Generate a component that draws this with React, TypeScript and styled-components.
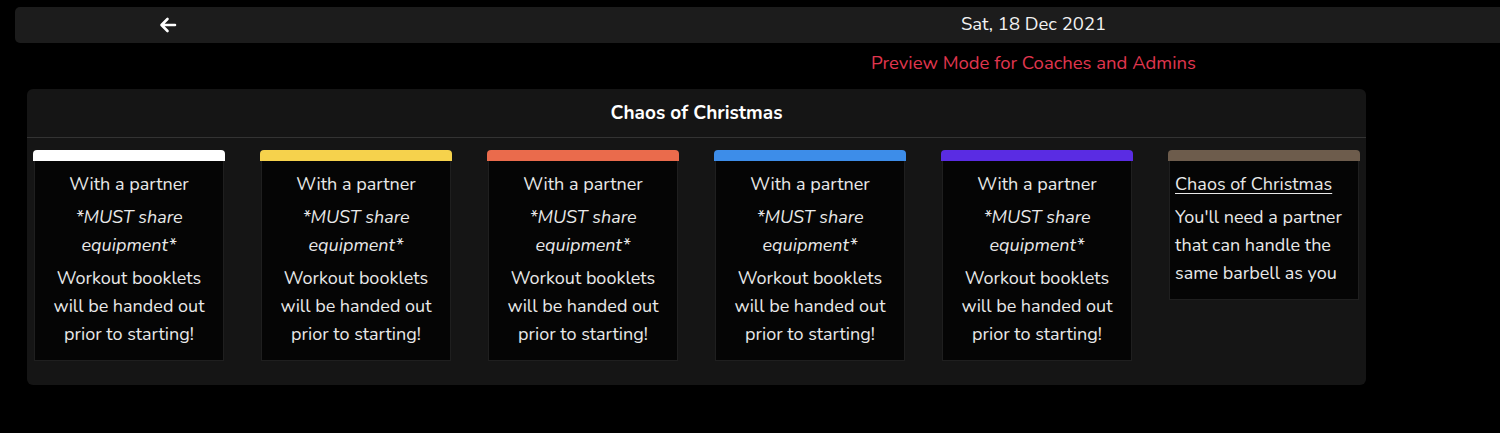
import styled, { createGlobalStyle } from "styled-components";

const GlobalStyle = createGlobalStyle`
  html, body {
    margin: 0;
    background: #000;
  }
  body {
    font-family: "Nunito", "Lato", "Open Sans", sans-serif;
    color: #e9e9e9;
  }
`;

const Page = styled.div`
  padding-top: 7px;
`;

const TopBar = styled.div`
  display: grid;
  grid-template-columns: 306px 1fr;
  height: 36px;
  margin-left: 15px;
  background: #1c1c1c;
  border-radius: 5px 0 0 5px;
`;

const BackButton = styled.button`
  display: flex;
  align-items: center;
  justify-content: center;
  background: none;
  border: none;
  color: #fff;
  cursor: pointer;
  padding: 0;
`;

const DateLabel = styled.div`
  display: flex;
  align-items: center;
  justify-content: center;
  padding-left: 246px;
  padding-bottom: 2px;
  font-size: 18.5px;
  color: #f2f2f2;
`;

const NoticeRow = styled.div`
  display: grid;
  grid-template-columns: 321px 1fr;
  height: 40px;
  align-items: center;
`;

const Notice = styled.div`
  grid-column: 2;
  padding-left: 246px;
  text-align: center;
  font-size: 18.5px;
  color: #e0364f;
`;

const Panel = styled.section`
  width: 1339px;
  margin: 6px 0 0 27px;
  background: #151515;
  border-radius: 6px;
  padding-bottom: 24px;
`;

const PanelTitle = styled.h2`
  margin: 0;
  height: 48px;
  display: flex;
  align-items: center;
  justify-content: center;
  font-size: 19px;
  font-weight: 700;
  color: #fff;
  border-bottom: 1px solid #333;
`;

const CardRow = styled.div`
  display: grid;
  grid-template-columns: repeat(6, 192px);
  gap: 35px;
  padding: 12px 6px 0;
  align-items: start;
`;

const Card = styled.div`
  display: flex;
  flex-direction: column;
`;

const Strip = styled.div<{ $color: string }>`
  height: 11px;
  background: ${(p) => p.$color};
  border-radius: 4px 4px 0 0;
`;

const CardBody = styled.div<{ $left?: boolean }>`
  margin: 0 1px;
  background: #050505;
  border: 1px solid #1f1f1f;
  border-top: none;
  padding: ${(p) => (p.$left ? "9px 5px 12px" : "9px 7px 12px")};
  text-align: ${(p) => (p.$left ? "left" : "center")};
  font-size: 18px;
  line-height: 28px;
`;

const Para = styled.p<{ $italic?: boolean }>`
  margin: 0 0 5px;
  font-style: ${(p) => (p.$italic ? "italic" : "normal")};
  &:last-child {
    margin-bottom: 0;
  }
`;

const LinkTitle = styled.a`
  color: inherit;
  text-decoration: underline;
  text-underline-offset: 3px;
`;

const colors = ["#ffffff", "#f6d24c", "#ea6b4c", "#3d8de9", "#5a2ce3"];

export default function App() {
  return (
    <>
      <GlobalStyle />
      <Page>
        <TopBar>
          <BackButton aria-label="Back">
            <svg width="18" height="16" viewBox="0 0 18 16" fill="none">
              <path
                d="M16 8H3M8.5 2L2.5 8l6 6"
                stroke="#fff"
                strokeWidth="2.6"
                strokeLinecap="round"
                strokeLinejoin="round"
              />
            </svg>
          </BackButton>
          <DateLabel>Sat, 18 Dec 2021</DateLabel>
        </TopBar>
        <NoticeRow>
          <Notice>Preview Mode for Coaches and Admins</Notice>
        </NoticeRow>
        <Panel>
          <PanelTitle>Chaos of Christmas</PanelTitle>
          <CardRow>
            {colors.map((c) => (
              <Card key={c}>
                <Strip $color={c} />
                <CardBody>
                  <Para>With a partner</Para>
                  <Para $italic>*MUST share equipment*</Para>
                  <Para>Workout booklets will be handed out prior to starting!</Para>
                </CardBody>
              </Card>
            ))}
            <Card>
              <Strip $color="#6d5c4c" />
              <CardBody $left>
                <Para>
                  <LinkTitle href="#">Chaos of Christmas</LinkTitle>
                </Para>
                <Para>You'll need a partner that can handle the same barbell as you</Para>
              </CardBody>
            </Card>
          </CardRow>
        </Panel>
      </Page>
    </>
  );
}
